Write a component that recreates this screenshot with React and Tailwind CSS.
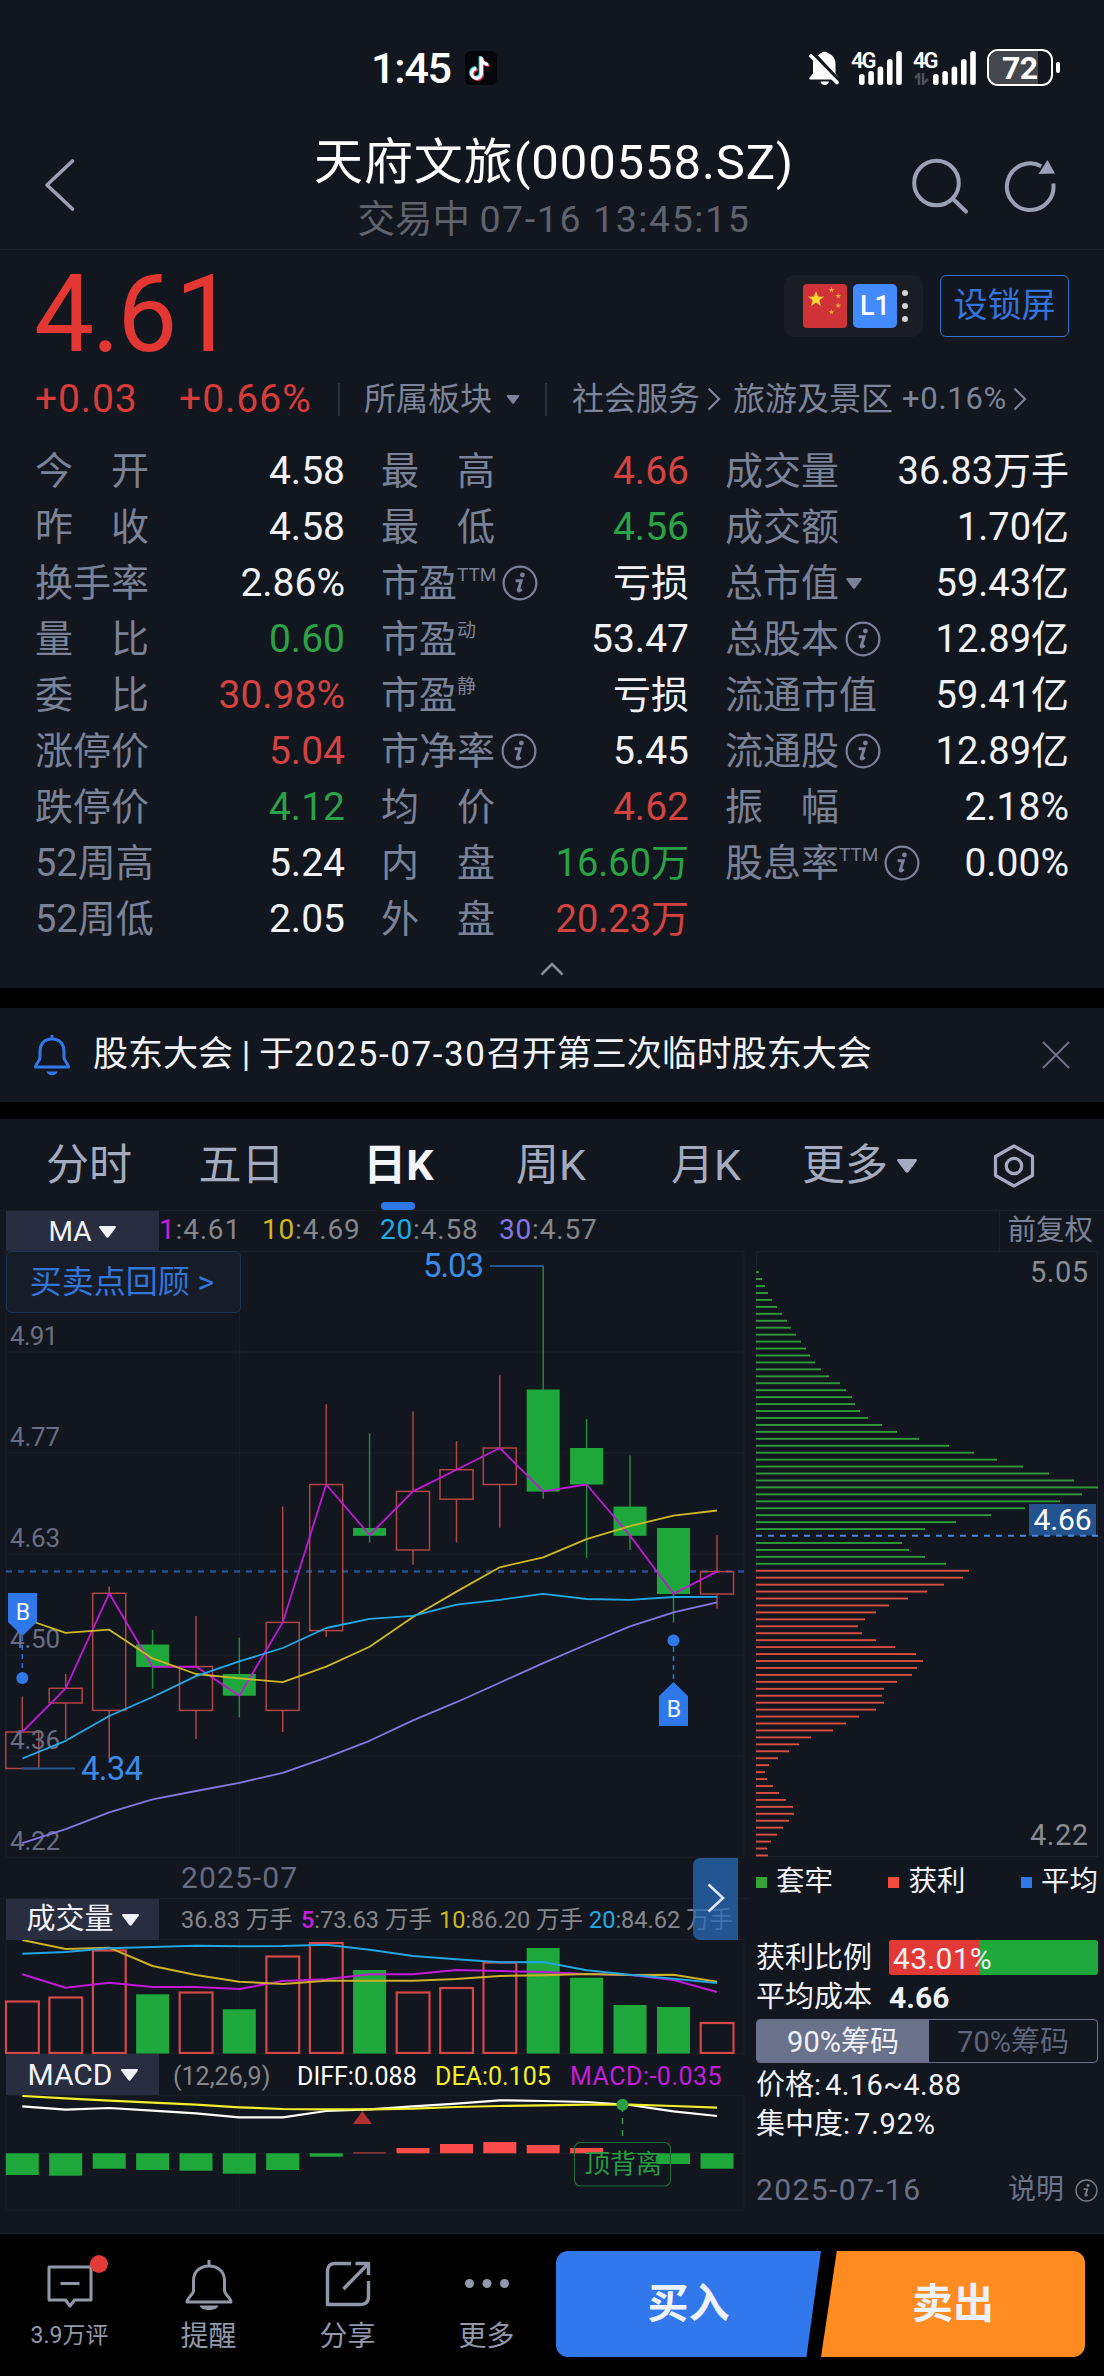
import clsx from 'clsx'

const CENTERS = [22.3, 65.7, 109.2, 152.6, 196, 239.3, 282.7, 326.2, 369.6, 413, 456.5, 499.8, 543.2, 586.6, 630, 673.5, 717]

// [top, bottom, wickTop, wickBottom, isUp]
const CANDLES = [
  [1732, 1768.5, 1696.5, 1768.5, 1],
  [1688.3, 1703, 1674, 1739, 1],
  [1593.3, 1710.4, 1586.4, 1759.4, 1],
  [1644.5, 1667, 1630, 1688.7, 0],
  [1666.6, 1710.4, 1615.9, 1739, 1],
  [1674, 1695.7, 1637.6, 1717.3, 0],
  [1622.4, 1710.4, 1506.6, 1732, 1],
  [1484.5, 1630.6, 1404.2, 1637, 1],
  [1528, 1535.8, 1433.3, 1542.6, 0],
  [1491.4, 1550, 1411.6, 1564.7, 1],
  [1469.7, 1499.2, 1441, 1542.6, 1],
  [1448, 1484.5, 1375.2, 1527.8, 1],
  [1389.5, 1491.6, 1266, 1498.8, 0],
  [1448, 1484.5, 1419, 1557.8, 0],
  [1506.6, 1535.8, 1455.4, 1550, 0],
  [1528, 1594, 1528, 1622.4, 0],
  [1571.6, 1594, 1535.2, 1608.5, 1],
]

const MA = {
  ma1: [1732, 1688.3, 1593.3, 1667, 1666.6, 1695.7, 1622.4, 1484.5, 1535, 1491.4, 1469.7, 1448, 1491.4, 1484.5, 1535.6, 1593.8, 1571.6],
  ma10: [1618, 1632.8, 1629.7, 1658.4, 1674, 1678.3, 1682.2, 1666.6, 1646.7, 1617, 1591.6, 1567.3, 1557.3, 1539.1, 1526.1, 1515.7, 1510.5],
  ma20: [1758.5, 1740.8, 1716, 1697, 1676.1, 1661.4, 1648, 1628, 1618.9, 1615.9, 1604.6, 1599.8, 1593.8, 1599, 1599.8, 1597, 1596.8],
  ma30: [1843.1, 1829.2, 1812.3, 1799.3, 1791, 1782.8, 1772.9, 1757.7, 1740.8, 1720.4, 1702.2, 1682.7, 1663.1, 1644.5, 1626.3, 1612.4, 1602.4],
}

const VOL_TOPS = [2001.5, 1997.5, 1950.5, 1994.3, 1992.5, 2009.3, 1956.5, 1943, 1970, 1992.5, 1988, 1962.5, 1948, 1977.7, 2005, 2007, 2023]
const VOL = {
  ma5: [1974.3, 1987.7, 1982.7, 1987, 1987, 1989, 1981, 1979.3, 1974.3, 1974.3, 1970, 1971, 1972, 1974, 1975, 1980, 1992],
  ma10: [1940, 1949, 1947.7, 1966, 1975, 1981.7, 1984, 1980.7, 1980.7, 1980.7, 1979, 1976, 1975.3, 1974, 1975, 1974.7, 1981.7],
  ma20: [1953.7, 1952, 1948.3, 1947, 1945.7, 1946.3, 1946, 1944.7, 1949.7, 1956, 1959.3, 1962.3, 1962, 1970.3, 1974.7, 1978.7, 1983],
}

const DEA = [2096, 2098.3, 2100.7, 2102.7, 2104.7, 2107.3, 2109, 2109.3, 2109.3, 2108.7, 2107, 2106, 2105.3, 2104.7, 2104.7, 2106, 2107.7]
const DIFF = [2106.3, 2109.7, 2108, 2110.7, 2113.3, 2117.3, 2117.3, 2111, 2109.3, 2106.3, 2103.7, 2100.3, 2101, 2102, 2105, 2111.3, 2116]
const MACD_BARS = [2175, 2175.7, 2168.7, 2170, 2170.7, 2173.7, 2170, 2156.7, 2152.5, 2148, 2144, 2142, 2145, 2148, 2154, 2164, 2168.7]
const MACD_ZERO = 2153.3

const CHIPS = [
  3, 6, 9, 12, 16, 21, 26, 31, 35, 40, 45, 50, 54, 59, 65, 73, 84, 90, 96, 99, 104, 112, 126, 141, 163, 193, 218, 241, 267,
  293, 318, 342, 326, 304, 269, 235, 200, 169, 0, 146, 153, 169, 190, 213, 207, 188, 171, 152, 133, 120, 109, 102, 106,
  120, 139, 160, 167, 161, 156, 141, 128, 126, 128, 120, 103, 90, 77, 55, 43, 33, 22, 13, 9, 11, 17, 23, 30, 37, 38, 33,
  27, 21, 15, 11, 12,
]

const RED = 'text-[#d24341]'
const GREEN = 'text-[#2ba248]'

const STATS = [
  [['今', '开'], '4.58', ''],
  [['最', '高'], '4.66', RED],
  [['成', '交', '量'], '36.83万手', ''],
  [['昨', '收'], '4.58', ''],
  [['最', '低'], '4.56', GREEN],
  [['成', '交', '额'], '1.70亿', ''],
  [['换', '手', '率'], '2.86%', ''],
  [['市', '盈'], '亏损', '', { sup: 'TTM', info: true }],
  [['总', '市', '值'], '59.43亿', '', { caret: true }],
  [['量', '比'], '0.60', GREEN],
  [['市', '盈'], '53.47', '', { sup: '动' }],
  [['总', '股', '本'], '12.89亿', '', { info: true }],
  [['委', '比'], '30.98%', RED],
  [['市', '盈'], '亏损', '', { sup: '静' }],
  [['流', '通', '市', '值'], '59.41亿', ''],
  [['涨', '停', '价'], '5.04', RED],
  [['市', '净', '率'], '5.45', '', { info: true }],
  [['流', '通', '股'], '12.89亿', '', { info: true }],
  [['跌', '停', '价'], '4.12', GREEN],
  [['均', '价'], '4.62', RED],
  [['振', '幅'], '2.18%', ''],
  [['52周高'], '5.24', ''],
  [['内', '盘'], '16.60万', GREEN],
  [['股', '息', '率'], '0.00%', '', { sup: 'TTM', info: true }],
  [['52周低'], '2.05', ''],
  [['外', '盘'], '20.23万', RED],
]

const toPoints = (ys) => ys.map((y, i) => `${CENTERS[i]},${y}`).join(' ')

function InfoIcon({ className }) {
  return (
    <svg viewBox="0 0 36 36" className={className} fill="none">
      <circle cx="18" cy="18" r="16.4" stroke="currentColor" strokeWidth="2.2" />
      <circle cx="20.4" cy="10" r="2.4" fill="currentColor" />
      <path d="M13.6 15.8h5.600l-2.900 9.200c-.4 1.500 1 1.400 3.300-.7" stroke="currentColor" strokeWidth="2.900" />
    </svg>
  )
}

function Triangle({ className }) {
  return (
    <svg viewBox="0 0 20 14" className={className}>
      <path d="M1.6 0h16.8c1.3 0 2 1.2 1.1 2.2l-8 10.8c-.8 1.1-2.2 1.1-3 0L.5 2.2C-.4 1.200.3 0 1.600 0z" fill="currentColor" />
    </svg>
  )
}

function Signal({ className }) {
  return (
    <svg viewBox="0 0 43 34" className={className} fill="#fff">
      <rect x="0" y="23" width="5.600" height="11" rx="2.5" />
      <rect x="9.300" y="20" width="5.600" height="14" rx="2.5" />
      <rect x="18.600" y="15.500" width="5.600" height="18.500" rx="2.5" />
      <rect x="28" y="8" width="5.600" height="26" rx="2.500" />
      <rect x="37.200" y="0" width="5.600" height="34" rx="2.500" />
    </svg>
  )
}

function StatusBar() {
  return (
    <div className="flex h-[132px] items-start pt-[49px] text-white">
      <div className="ml-[371px] flex items-center">
        <span className="w-[94px] text-[43px] leading-[38px] font-medium tracking-[-1.200px]">1:45</span>
        <svg viewBox="0 0 32 34" className="h-[34px] w-8">
          <rect width="32" height="34" rx="6" fill="#05060c" />
          <g fill="none" strokeWidth="3.2">
            <path d="M16.300 6v16.500a4.800 4.800 0 1 1-4.800-4.800M16.300 7c.5 4 3.400 6.500 7 6.500" stroke="#25e8e0" transform="translate(-1 -1)" />
            <path d="M16.300 6v16.500a4.800 4.800 0 1 1-4.800-4.800M16.300 7c.5 4 3.400 6.500 7 6.500" stroke="#f32b55" transform="translate(1.200 1)" />
            <path d="M16.300 6v16.500a4.800 4.800 0 1 1-4.800-4.800M16.300 7c.5 4 3.400 6.500 7 6.500" stroke="#fff" />
          </g>
        </svg>
      </div>
      <div className="ml-auto flex h-[38px] items-start pr-[44px]">
        <svg viewBox="0 0 30 36" className="mt-0.5 h-9 w-[30px]">
          <path d="M10 3.500c1-1.300 2-1.500 2.500-1.600C13 .3 18 .3 18.500 2c5 1.500 8 5.500 8 10.500v10L30 27 9 4.500zM4 12c0-1 .2-2 .6-3L24 28.500H1.500c-1.500 0-1.500-1.500-.5-2.500l3-3.500zM11.500 30.500h8.500c-.5 4.500-8 4.500-8.500 0z" fill="#fff" />
          <path d="M2 5l26 26.500" stroke="#fff" strokeWidth="3.800" strokeLinecap="round" />
        </svg>
        <div className="relative ml-[18px] h-[38px] w-[45px]">
          <Signal className="mt-[2px] ml-[2px] h-[34px] w-[43px]" />
          <span className="absolute top-[2px] -left-[6px] text-[22px] leading-[20px] font-semibold tracking-[-2px]">4G</span>
        </div>
        <div className="relative ml-[29px] h-[38px] w-[45px]">
          <Signal className="mt-[2px] ml-[2px] h-[34px] w-[43px]" />
          <span className="absolute top-[2px] -left-[18px] text-[22px] leading-[20px] font-semibold tracking-[-2px]">4G</span>
          <svg viewBox="0 0 16 12" className="absolute top-[24px] -left-[17px] h-3 w-4" fill="none" stroke="#4c4f56" strokeWidth="2.600">
            <path d="M1 5l4-4v11M9 0v11l5-5" />
          </svg>
        </div>
        <div className="relative ml-[11px] flex h-[37px] w-[66px] items-center rounded-[11px] border-2 border-white">
          <div className="h-full w-[49px] rounded-l-[9px] bg-[#44484e]" />
          <span className="absolute left-[13px] text-[32px] leading-[34px] font-bold tracking-[-0.5px]">72</span>
        </div>
        <div className="mt-[13px] ml-[3px] h-[11px] w-1 rounded-full bg-white" />
      </div>
    </div>
  )
}

function Header() {
  return (
    <header className="flex h-[118px] border-b border-[#1a1e26] text-[#9aa1b4]">
      <svg viewBox="0 0 34 54" className="mt-[26px] ml-[43px] h-[54px] w-[34px] shrink-0" fill="none" stroke="currentColor" strokeWidth="3.600" strokeLinecap="round" strokeLinejoin="round">
        <path d="M29.500 3L4 27l25.500 24" />
      </svg>
      <div className="ml-[176px] w-[602px] text-center">
        <h1 className="mt-[3px] text-[49px] leading-[56px] tracking-[0.900px] whitespace-nowrap text-white">天府文旅(000558.SZ)</h1>
        <p className="mt-[2px] text-[37.500px] leading-[52px] text-[#5f636d]">
          交易中 <span className="tracking-[1.600px]">07-16 13:45:15</span>
        </p>
      </div>
      <svg viewBox="0 0 60 60" className="mt-[25px] ml-[56px] h-[60px] w-[60px] shrink-0" fill="none" stroke="currentColor" strokeWidth="4">
        <circle cx="25.500" cy="26" r="22.300" />
        <path d="M42 42l13 12.500" strokeLinecap="round" />
      </svg>
      <svg viewBox="0 0 60 60" className="mt-[25px] ml-[29px] h-[60px] w-[60px] shrink-0" fill="none" stroke="currentColor" strokeWidth="4">
        <path d="M53.800 26a23.300 23.300 0 1 1-12-17.300" transform="translate(-.5 .5)" />
        <path d="M47.500 3l7.500 13.500-16.500.5z" fill="currentColor" stroke="none" />
      </svg>
    </header>
  )
}

function Flag() {
  const star = 'M0-8l2 5.500 6 .2-4.700 3.600 1.700 5.700L0 3.600-5 7l1.700-5.700L-8-2.300l6-.2z'
  return (
    <svg viewBox="0 0 44 44" className="h-11 w-11">
      <rect width="44" height="44" rx="4" fill="#cf3237" />
      <path d={star} fill="#fdd62f" transform="translate(13 15)" />
      <g fill="#f2a52c">
        <path d={star} transform="translate(28.500 6) scale(.36)" />
        <path d={star} transform="translate(35.200 12) scale(.36)" />
        <path d={star} transform="translate(35.200 21.500) scale(.36)" />
        <path d={star} transform="translate(28.500 28) scale(.36)" />
      </g>
    </svg>
  )
}

function Quote() {
  return (
    <section className="h-[738px]">
      <div className="flex h-[112px] justify-between">
        <div className="mt-[7px] ml-[34px] text-[107px] leading-[116px] tracking-[-2.500px] text-[#e33733]">4.61</div>
        <div className="mt-[25px] mr-[35px] flex h-[62px]">
          <div className="flex w-[139px] items-center rounded-[10px] bg-[#1a1d23] pl-[19px]">
            <Flag />
            <div className="ml-[6px] flex h-11 w-11 items-center justify-center rounded-[5px] bg-[#438aff] text-[27px] leading-none font-medium text-white">L1</div>
            <div className="ml-[5px] flex flex-col gap-[7px]">
              <i className="h-[6px] w-[6px] rounded-full bg-[#d2d3d6]" />
              <i className="h-[6px] w-[6px] rounded-full bg-[#d2d3d6]" />
              <i className="h-[6px] w-[6px] rounded-full bg-[#d2d3d6]" />
            </div>
          </div>
          <button className="ml-[17px] h-[62px] w-[129px] rounded-[6px] border-[1.500px] border-[#3672cc] pb-[3px] text-[34px] leading-none text-[#3375dc]">设锁屏</button>
        </div>
      </div>

      <div className="flex h-[74px] items-center text-[#7c8499]">
        <span className="ml-[35px] w-[144px] text-[39px] tracking-[0.900px] text-[#d83c3a]">+0.03</span>
        <span className="w-[159px] text-[39px] tracking-[1px] text-[#d83c3a]">+0.66%</span>
        <i className="h-[33px] w-0.5 bg-[#2b303d]" />
        <span className="ml-6 text-[32px]">所属板块</span>
        <Triangle className="ml-[14px] h-[9px] w-[14px]" />
        <i className="ml-[25px] h-[33px] w-0.5 bg-[#2b303d]" />
        <span className="ml-[25px] text-[32px]">社会服务</span>
        <svg viewBox="0 0 14 24" className="ml-[7px] h-6 w-[14px]" fill="none" stroke="currentColor" strokeWidth="2.200">
          <path d="M1.500 1.500L12 12 1.500 22.500" />
        </svg>
        <span className="ml-[12px] text-[32px]">旅游及景区</span>
        <span className="ml-[9px] text-[31px] tracking-[0.700px]">+0.16%</span>
        <svg viewBox="0 0 14 24" className="ml-[6px] h-6 w-[14px]" fill="none" stroke="currentColor" strokeWidth="2.200">
          <path d="M1.500 1.500L12 12 1.500 22.500" />
        </svg>
      </div>

      <div className="ml-[35px] grid h-[511px] grid-cols-[310px_308px_344px] grid-rows-9 gap-x-9 pt-[7px] text-[38px] leading-[56px]">
        {STATS.map(([label, value, tone, extra = {}], i) => (
          <div key={i} className="flex h-14 items-center justify-between whitespace-nowrap">
            <div className="flex items-center text-[#7a8297]">
              <div className={clsx('flex justify-between', label.length === 2 && !extra.sup && 'w-[114px]')}>
                {label.map((ch) => (
                  <span key={ch}>{ch}</span>
                ))}
              </div>
              {extra.sup && <sup className="-top-[9px] text-[19px] leading-none">{extra.sup}</sup>}
              {extra.info && <InfoIcon className="ml-[6px] h-9 w-9" />}
              {extra.caret && <Triangle className="ml-[6px] h-[11px] w-[18px]" />}
            </div>
            <span className={clsx(/[万亿亏]/.test(value) ? 'text-[38px]' : 'text-[39px]', tone || 'text-[#f0f2f7]')}>{value}</span>
          </div>
        ))}
      </div>

      <svg viewBox="0 0 24 14" className="mx-auto mt-[15px] h-[14px] w-6" fill="none" stroke="#8a8d94" strokeWidth="2.500">
        <path d="M1.500 12.500L12 2l10.500 10.500" />
      </svg>
    </section>
  )
}

function Notice() {
  return (
    <section className="mt-5 flex h-[94px] items-center bg-[#12161e]">
      <svg viewBox="0 0 38 42" className="ml-[33px] h-[42px] w-[38px]" fill="none" stroke="#3078ea" strokeWidth="3" strokeLinejoin="round">
        <path d="M19 1v4M19 5C11 5 7 10.500 7 17v7c0 3-4.500 5.500-4.500 9h33c0-3.500-4.500-6-4.500-9v-7c0-6.500-4-12-12-12z" />
        <path d="M13.500 37.500h11c-1 5-10 5-11 0z" fill="#3078ea" stroke="none" />
      </svg>
      <p className="ml-[22px] text-[35px] whitespace-nowrap text-[#f0f2f7]">
        股东大会 | 于<span className="tracking-[1.600px]">2025-07-30</span>召开第三次临时股东大会
      </p>
      <svg viewBox="0 0 28 28" className="mr-[34px] ml-auto h-7 w-7" stroke="#6d7488" strokeWidth="2">
        <path d="M1 1l26 26M27 1L1 27" />
      </svg>
    </section>
  )
}

function Tabs() {
  return (
    <nav className="flex h-[91px] items-center pt-[2px] text-[43px] text-[#a4abbf]">
      <span className="ml-[13px] w-[152px] text-center">分时</span>
      <span className="w-[153px] text-center">五日</span>
      <span className="relative w-[161px] text-center font-bold text-[#f3f4f8]">
        日K
        <i className="absolute -bottom-[12px] left-[63px] h-2 w-[34px] rounded-full bg-[#2f78ea]" />
      </span>
      <span className="w-[144px] text-center">周K</span>
      <span className="w-[166px] text-center">月K</span>
      <span className="ml-[13px]">更多</span>
      <Triangle className="ml-[9px] h-[14px] w-[20px]" />
      <svg viewBox="0 0 42 44" className="ml-[76px] h-11 w-[42px]" fill="none" stroke="currentColor" strokeWidth="3.200">
        <path d="M21 2l18.500 10.500v19L21 42 2.500 31.500v-19z" strokeLinejoin="round" />
        <circle cx="21" cy="22" r="7.700" />
      </svg>
    </nav>
  )
}

function Selector({ children, className }) {
  return (
    <div className="ml-[6px] flex h-[41px] w-[153px] shrink-0 items-center justify-center bg-[#282e40] leading-none text-[#f1f2f7]">
      <span className={className}>{children}</span>
      <Triangle className="ml-[8px] h-[12px] w-[17px]" />
    </div>
  )
}

function PriceChart() {
  return (
    <svg viewBox="0 1251 750 607" className="h-[607px] w-[750px] overflow-visible">
      <g stroke="#191e26" fill="none" strokeWidth="1.500">
        <path d="M6 1251.500H744V1857.500H6zM6 1352H744M6 1453H744M6 1554H744M6 1655H744M6 1756H744M239.500 1251V1858" />
      </g>
      <path d="M6 1571.600H744" stroke="#2c4f8d" strokeWidth="2.500" strokeDasharray="6 6" />

      {CANDLES.map(([top, bottom, hi, lo, up], i) => {
        const x = CENTERS[i]
        return up ? (
          <g key={i} stroke="#b04746" strokeWidth="1.500" fill="none">
            <path d={`M${x} ${hi}V${top}M${x} ${bottom}V${lo}`} />
            <rect x={x - 16.500} y={top} width="33" height={bottom - top} />
          </g>
        ) : (
          <g key={i}>
            <path d={`M${x} ${hi}V${lo}`} stroke="#1e8c38" strokeWidth="1.500" />
            <rect x={x - 16.500} y={top} width="33" height={bottom - top} fill="#1ea83c" />
          </g>
        )
      })}

      <g className="text-[26px]" fill="#696f82">
        <text x="10" y="1345" textLength="48">4.91</text>
        <text x="10" y="1446" textLength="50">4.77</text>
        <text x="10" y="1547" textLength="50">4.63</text>
        <text x="10" y="1648" textLength="50">4.50</text>
        <text x="10" y="1749" textLength="50">4.36</text>
        <text x="10" y="1850" textLength="50">4.22</text>
      </g>

      <g fill="none" strokeWidth="1.800" strokeLinejoin="round">
        <polyline points={toPoints(MA.ma1)} stroke="#c218d8" />
        <polyline points={toPoints(MA.ma10)} stroke="#cdb824" />
        <polyline points={toPoints(MA.ma20)} stroke="#20abe8" />
        <polyline points={toPoints(MA.ma30)} stroke="#8576e0" />
      </g>

      <path d="M490 1266H543.500" stroke="#28578f" strokeWidth="1.800" />
      <path d="M22 1768.500H75" stroke="#28578f" strokeWidth="1.800" />
      <g className="text-[33px]" fill="#3b8ce8">
        <text x="423" y="1277" textLength="61">5.03</text>
        <text x="81" y="1780" textLength="62">4.34</text>
      </g>

      <g stroke="#2f6fd6" strokeWidth="1.500" strokeDasharray="5 4">
        <path d="M22.300 1636V1672M673.500 1647V1682" />
      </g>
      <g fill="#2f78ea">
        <path d="M8 1593H37V1622L22.500 1636 8 1622z" />
        <circle cx="22.300" cy="1678" r="6" />
        <circle cx="673.500" cy="1640.600" r="6" />
        <path d="M659 1726H688V1696L673.500 1682 659 1696z" />
      </g>
      <g className="text-[23px]" fill="#f1f5ff" textAnchor="middle">
        <text x="22.800" y="1619.500">B</text>
        <text x="674" y="1716.500">B</text>
      </g>
    </svg>
  )
}

function VolumeChart() {
  return (
    <svg viewBox="0 1939 750 115" className="h-[115px] w-[750px]">
      <path d="M6 1939.500H744V2053.500H6zM239.500 1939V2054" stroke="#191e26" fill="none" strokeWidth="1.500" />
      {VOL_TOPS.map((top, i) =>
        CANDLES[i][4] ? (
          <rect key={i} x={CENTERS[i] - 16.300} y={top} width="32.800" height={2053 - top} fill="none" stroke="#d44948" strokeWidth="2.200" />
        ) : (
          <rect key={i} x={CENTERS[i] - 16.500} y={top} width="33" height={2053.500 - top} fill="#1ea83c" />
        ),
      )}
      <g fill="none" strokeWidth="2" strokeLinejoin="round">
        <polyline points={toPoints(VOL.ma5)} stroke="#c218d8" />
        <polyline points={toPoints(VOL.ma10)} stroke="#cdb024" />
        <polyline points={toPoints(VOL.ma20)} stroke="#22a5e2" />
      </g>
    </svg>
  )
}

function MacdChart() {
  return (
    <svg viewBox="0 2095 750 138" className="h-[138px] w-[750px]">
      <path d="M6 2095.500H744V2210H6zM6 2153.300H744M239.500 2095V2210" stroke="#181d25" fill="none" strokeWidth="1.200" />
      {MACD_BARS.map((y, i) => (
        <rect
          key={i}
          x={CENTERS[i] - 16.500}
          y={Math.min(y, MACD_ZERO)}
          width="33"
          height={Math.abs(y - MACD_ZERO)}
          fill={y > MACD_ZERO ? '#1ea83c' : '#fb4b4a'}
        />
      ))}
      <g fill="none" strokeWidth="2.200" strokeLinejoin="round">
        <polyline points={toPoints(DIFF)} stroke="#fff" />
        <polyline points={toPoints(DEA)} stroke="#f2ee2b" />
      </g>
      <path d="M362.300 2111L372 2124H353z" fill="#b23030" />
      <path d="M622.500 2106V2142" stroke="#239a41" strokeWidth="1.500" strokeDasharray="6 6" />
      <circle cx="622.500" cy="2104.700" r="6" fill="#2a9f45" />
      <rect x="574.500" y="2142.500" width="96" height="43.500" rx="6" fill="none" stroke="#1f6a35" strokeWidth="1.200" />
      <text x="584" y="2173" className="text-[26px]" fill="#269a44">顶背离</text>
    </svg>
  )
}

function ChipPanel() {
  return (
    <aside className="w-[354px] text-[29px] leading-none text-[#eff1f6]">
      <div className="flex h-[41px] items-center justify-end border-t border-[#1a1e27] pr-[11px] text-[28.500px] text-[#7a8297]">
        <span className="flex h-full items-center border-l border-[#1a1e27] pl-[7px]">前复权</span>
      </div>
      <svg viewBox="750 1251 354 607" className="h-[607px] w-[354px]">
        <rect x="756.500" y="1251.500" width="341" height="605" fill="none" stroke="#1b2029" strokeWidth="1.200" />
        {CHIPS.map((len, i) => (
          <rect
            key={i}
            x="756"
            y={1271.200 + i * 6.944}
            width={len}
            height="1.900"
            fill={i < 43 ? '#329a3b' : '#dc4e41'}
          />
        ))}
        <rect x="1029" y="1504" width="67" height="31.500" fill="#23538f" />
        <path d="M756 1535.700H1098" stroke="#4a87dc" strokeWidth="2" strokeDasharray="6 6" />
        <text x="1033.500" y="1530" textLength="58" className="text-[30px]" fill="#fff">4.66</text>
        <g className="text-[29px]" fill="#898c92">
          <text x="1030" y="1282" textLength="58">5.05</text>
          <text x="1030" y="1844.500" textLength="58">4.22</text>
        </g>
      </svg>
      <div className="flex h-[46px] items-center justify-between pt-[2px] pr-[6px] pl-[6px] text-[28.500px]">
        <span className="flex items-center gap-[9px]"><i className="h-[11px] w-[11px] bg-[#37a336]" />套牢</span>
        <span className="flex items-center gap-[9px]"><i className="h-[11px] w-[11px] bg-[#f44b3a]" />获利</span>
        <span className="flex items-center gap-[9px]"><i className="h-[11px] w-[11px] bg-[#2f78ea]" />平均</span>
      </div>
      <div className="mt-[36px] flex h-[35px] items-center pl-[6px]">
        <span className="w-[133px] pt-[2px]">获利比例</span>
        <span className="flex h-[35px] w-[209px] items-center rounded-[3px] bg-[linear-gradient(90deg,#e33936_43%,#1ea83c_43%)] pt-[2px] pl-1 text-[30px] tracking-[0.300px]">43.01%</span>
      </div>
      <div className="flex h-[43px] items-center pt-[2px] pl-[6px]">
        <span className="w-[133px]">平均成本</span>
        <b className="text-[30px]">4.66</b>
      </div>
      <div className="mt-[1px] ml-[6px] flex h-11 w-[342px] overflow-hidden rounded-[4px] border border-[#69728a]">
        <span className="flex w-[172px] items-center justify-center bg-[#69728a] pt-[2px]">90%筹码</span>
        <span className="flex flex-1 items-center justify-center pt-[2px] text-[#5e667b]">70%筹码</span>
      </div>
      <div className="flex h-10 items-center pt-[4px] pl-[6px]">价格:<span className="ml-[4px] tracking-[0.400px]">4.16~4.88</span></div>
      <div className="flex h-10 items-center pt-[2px] pl-[6px]">集中度:<span className="ml-[4px] tracking-[0.800px]">7.92%</span></div>
      <div className="mt-[25px] flex h-11 items-center pr-[6px] pl-[6px] text-[#6a7188]">
        <span className="text-[30px] tracking-[1.400px]">2025-07-16</span>
        <span className="ml-auto text-[28px]">说明</span>
        <InfoIcon className="ml-[11px] h-[23px] w-[23px] text-[#777b86]" />
      </div>
    </aside>
  )
}

function ChartSection() {
  return (
    <section className="mt-[17px] h-[1114px] bg-[#12161e]">
      <Tabs />
      <div className="flex">
        <div className="w-[750px]">
          <div className="flex h-[41px] border-t border-[#1a1e27] text-[28px] leading-[38px] tracking-[0.800px] text-[#84878c]">
            <Selector className="text-[28px] tracking-normal">MA</Selector>
            <span className="w-[103px]"><b className="font-normal text-[#c41fdc]">1</b>:4.61</span>
            <span className="w-[118px]"><b className="font-normal text-[#cdb824]">10</b>:4.69</span>
            <span className="w-[119px]"><b className="font-normal text-[#20abe8]">20</b>:4.58</span>
            <span><b className="font-normal text-[#8576e0]">30</b>:4.57</span>
          </div>
          <div className="relative h-[607px]">
            <PriceChart />
            <button className="absolute top-0 left-[6px] h-[62px] w-[235px] rounded-[6px] border border-[#1d3355] bg-[#161c28] pr-[3px] pb-[1px] text-[32px] leading-none whitespace-nowrap text-[#3375d8]">买卖点回顾 &gt;</button>
          </div>
          <div className="h-10 pt-[1px] pl-[181px] text-[30px] leading-[38px] tracking-[1.100px] text-[#656c80]">2025-07</div>
          <div className="relative flex h-[41px] border-t border-[#1a1e27] text-[23.500px] leading-[43px] whitespace-nowrap text-[#84878c]">
            <Selector className="text-[29px]">成交量</Selector>
            <span className="ml-[22px] w-[120px]">36.83 万手</span>
            <span className="w-[138px]"><b className="font-medium text-[#c41fdc]">5</b>:73.63 万手</span>
            <span className="w-[150px]"><b className="font-normal text-[#cdb824]">10</b>:86.20 万手</span>
            <span><b className="font-normal text-[#20abe8]">20</b>:84.62 万手</span>
            <button className="absolute -top-[41px] left-[693px] flex h-[82px] w-[45px] items-center justify-center rounded-l-[7px] bg-[#2a6bb9]/75">
              <svg viewBox="0 0 18 30" className="mb-[2px] h-[30px] w-[18px]" fill="none" stroke="#dbe5f5" strokeWidth="2.600">
                <path d="M1.500 1.500L16 15 1.500 28.500" />
              </svg>
            </button>
          </div>
          <VolumeChart />
          <div className="flex h-[41px] text-[25px] leading-[45px] whitespace-nowrap">
            <Selector className="text-[30px]">MACD</Selector>
            <span className="ml-[14px] w-[124px] text-[#84878c]">(12,26,9)</span>
            <span className="w-[138px] text-white">DIFF:0.088</span>
            <span className="w-[135px] text-[#f2f02b]">DEA:0.105</span>
            <span className="tracking-[0.500px] text-[#c41fdc]">MACD:-0.035</span>
          </div>
          <MacdChart />
        </div>
        <ChipPanel />
      </div>
    </section>
  )
}

function BottomBar() {
  return (
    <footer className="flex h-[143px] border-t border-[#20242b] text-[28px] leading-none text-[#9097a9]">
      <div className="flex w-[139px] flex-col items-center">
        <div className="relative mt-[31px] h-12">
          <svg viewBox="0 0 46 46" className="h-[46px] w-[46px]" fill="none" stroke="currentColor" strokeWidth="3">
            <path d="M2 2h42v33H27.500L23 41l-4.500-6H2z" strokeLinejoin="round" />
            <path d="M13.500 18.500h19" />
          </svg>
          <i className="absolute -top-[10px] left-[43px] h-[18px] w-[18px] rounded-full bg-[#e33937]" />
        </div>
        <span className="mt-[11px] text-[23px]">3.9万评</span>
      </div>
      <div className="flex w-[139px] flex-col items-center">
        <svg viewBox="0 0 50 52" className="mt-[25px] h-[52px] w-[50px]" fill="none" stroke="currentColor" strokeWidth="3">
          <path d="M25 1v6M25 7C15 7 9.500 13.500 9.500 21.500v10C9.500 35.500 3 39 3 43h44c0-4-6.500-7.500-6.500-11.500v-10C40.500 13.500 35 7 25 7z" strokeLinejoin="round" />
          <path d="M15.500 46.500h19c-1.500 6-17.500 6-19 0z" fill="currentColor" stroke="none" />
        </svg>
        <span className="mt-[12px]">提醒</span>
      </div>
      <div className="flex w-[139px] flex-col items-center">
        <svg viewBox="0 0 46 46" className="mt-[27px] h-[46px] w-[46px]" fill="none" stroke="currentColor" strokeWidth="3.400">
          <path d="M26 2.500H10.500C5 2.500 2.500 5 2.500 10.500v33h33c5.500 0 8-2.500 8-8V20M30.500 2.500h13V14M43.500 2.500L18.500 28" strokeLinejoin="round" />
        </svg>
        <span className="mt-[16px]">分享</span>
      </div>
      <div className="flex w-[139px] flex-col items-center">
        <svg viewBox="0 0 46 46" className="mt-[27px] h-[46px] w-[46px]" fill="currentColor">
          <circle cx="5.500" cy="22.500" r="4.500" />
          <circle cx="23" cy="22.500" r="4.500" />
          <circle cx="40.500" cy="22.500" r="4.500" />
        </svg>
        <span className="mt-[16px]">更多</span>
      </div>
      <div className="mt-[17px] flex text-[41px] font-bold text-[#edf2fc]">
        <button className="flex h-[106px] w-[265px] items-center justify-center rounded-l-[12px] bg-[#3078eb] [clip-path:polygon(0_0,100%_0,94.5%_100%,0_100%)]">买入</button>
        <button className="flex h-[106px] w-[264px] items-center justify-center rounded-r-[12px] bg-[#ff8b21] [clip-path:polygon(6%_0,100%_0,100%_100%,0_100%)]">卖出</button>
      </div>
    </footer>
  )
}

export default function App() {
  return (
    <div className="h-[2376px] w-[1104px] overflow-hidden bg-black font-['Roboto','Noto_Sans_CJK_SC',sans-serif]">
      <div className="bg-[#12161e]">
        <StatusBar />
        <Header />
        <Quote />
      </div>
      <Notice />
      <ChartSection />
      <BottomBar />
    </div>
  )
}
